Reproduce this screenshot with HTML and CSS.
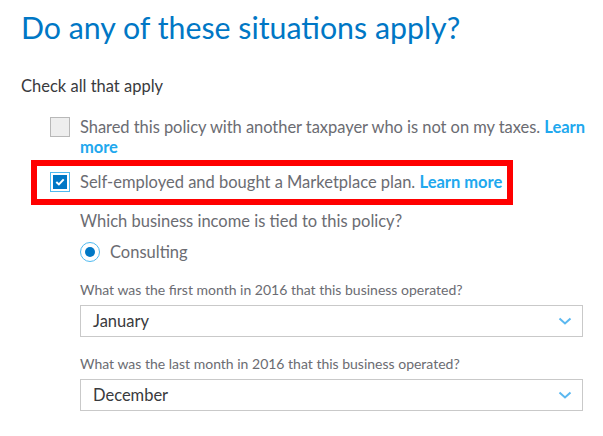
FILE: index.html
```html
<!DOCTYPE html>
<html lang="en">

<head>
    <meta charset="utf-8">
    <meta name="viewport" content="width=device-width, initial-scale=1.0">
    <title>Situations</title>
    <link rel="stylesheet" href="styles.css">
</head>

<body>
    <main class="side">
        <h1 class="overskrift">Do any of these situations apply?</h1>
        <p class="hjaelp">Check all that apply</p>

        <div class="valg forste">
            <span class="boks"></span>
            <p class="tekst">Shared this policy with another taxpayer who is not on my taxes. <a href="#" class="link">Learn more</a></p>
        </div>

        <div class="markeret">
            <div class="valg">
                <span class="boks tjek">
                    <svg width="10" height="8" viewBox="0 0 10 8"><path d="M1.3 4 L3.9 6.4 L8.7 1.4" fill="none" stroke="#fff" stroke-width="2"/></svg>
                </span>
                <p class="tekst">Self-employed and bought a Marketplace plan. <a href="#" class="link">Learn more</a></p>
            </div>
        </div>

        <div class="under">
            <p class="spm">Which business income is tied to this policy?</p>
            <div class="radio">
                <span class="cirkel"><span class="prik"></span></span>
                <span class="tekst">Consulting</span>
            </div>

            <label class="felt">
                <span class="etiket">What was the first month in 2016 that this business operated?</span>
                <span class="vaelger">January
                    <svg width="14" height="8" viewBox="0 0 14 8"><path d="M1.5 1.5 L7 6.5 L12.5 1.5" fill="none" stroke="#5bb8f0" stroke-width="2"/></svg>
                </span>
            </label>

            <label class="felt">
                <span class="etiket">What was the last month in 2016 that this business operated?</span>
                <span class="vaelger">December
                    <svg width="14" height="8" viewBox="0 0 14 8"><path d="M1.5 1.5 L7 6.5 L12.5 1.5" fill="none" stroke="#5bb8f0" stroke-width="2"/></svg>
                </span>
            </label>
        </div>
    </main>
</body></html>
```

FILE: styles.css
```css
body {
    margin: 0;
    font-family: Lato, "Open Sans", sans-serif;
    background-color: #fff;
    color: #393a3d;
}

.side {
    padding: 9px 20px 0 21px;
}

.overskrift {
    margin: 0;
    font-size: 30.3px;
    font-weight: 400;
    line-height: 36px;
    color: #0077c5;
}

.hjaelp {
    margin: 31px 0 0 0;
    font-size: 16.5px;
    line-height: 20px;
    color: #393a3d;
}

.valg {
    display: flex;
    align-items: flex-start;
    padding-left: 29px;
}

.forste {
    margin-top: 21px;
    margin-right: -12px;
}

.forste .tekst {
    letter-spacing: -0.05px;
}

.boks {
    flex: none;
    box-sizing: border-box;
    width: 20px;
    height: 20px;
    margin-right: 10px;
    border: 1.5px solid #b8b8b8;
    background-color: #eee;
    display: flex;
    align-items: center;
    justify-content: center;
}

.tjek {
    border: 1px solid #4fbaf0;
    background-color: #0077c5;
    box-shadow: inset 0 0 0 2px #fff;
}

.tekst {
    margin: 0;
    font-size: 16.5px;
    line-height: 20px;
    color: #6b6c72;
}

.link {
    color: #21a8ee;
    font-weight: 700;
    text-decoration: none;
}

.markeret {
    margin: 3px 0 0 10px;
    width: 470px;
    height: 33px;
    border: 6px solid #ff0000;
}

.markeret .valg {
    margin-top: 6px;
    padding-left: 13px;
}

.under {
    padding-left: 59px;
}

.spm {
    margin: 6px 0 0 0;
    font-size: 16.5px;
    line-height: 20px;
    color: #6b6c72;
}

.radio {
    display: flex;
    align-items: center;
    margin-top: 11px;
}

.cirkel {
    box-sizing: border-box;
    width: 20px;
    height: 20px;
    margin-right: 10px;
    border: 1.5px solid #4fbaf0;
    border-radius: 50%;
    display: flex;
    align-items: center;
    justify-content: center;
}

.prik {
    width: 10px;
    height: 10px;
    border-radius: 50%;
    background-color: #0077c5;
}

.felt {
    display: block;
    margin-top: 19px;
}

.felt + .felt {
    margin-top: 18px;
}

.etiket {
    display: block;
    font-size: 14px;
    line-height: 18px;
    color: #6b6c72;
}

.vaelger {
    box-sizing: border-box;
    display: flex;
    align-items: center;
    justify-content: space-between;
    margin-top: 6px;
    height: 32px;
    padding: 0 10px 0 12px;
    border: 1px solid #c9c9c9;
    font-size: 16.5px;
    color: #393a3d;
}
```
